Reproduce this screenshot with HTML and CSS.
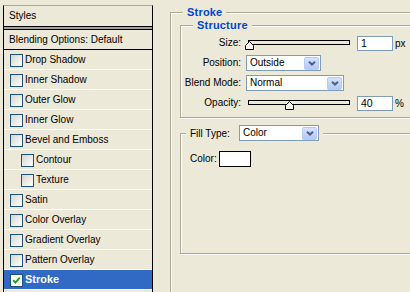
FILE: index.html
```html
<!DOCTYPE html>
<html lang="en">
<head>
  <meta charset="UTF-8">
  <title>Layer Style - Stroke</title>
  <link rel="stylesheet" href="styles.css">
</head>
<body>

  <div class="dialog">

    <!-- Styles list -->
    <div class="styles-panel">
      <div class="panel-title">Styles</div>
      <div class="panel-rule"></div>
      <div class="panel-blend">Blending Options: Default</div>
      <ul class="effect-list">
        <li class="effect"><span class="check"></span>Drop Shadow</li>
        <li class="effect"><span class="check"></span>Inner Shadow</li>
        <li class="effect"><span class="check"></span>Outer Glow</li>
        <li class="effect"><span class="check"></span>Inner Glow</li>
        <li class="effect"><span class="check"></span>Bevel and Emboss</li>
        <li class="effect sub"><span class="check"></span>Contour</li>
        <li class="effect sub"><span class="check"></span>Texture</li>
        <li class="effect"><span class="check"></span>Satin</li>
        <li class="effect"><span class="check"></span>Color Overlay</li>
        <li class="effect"><span class="check"></span>Gradient Overlay</li>
        <li class="effect"><span class="check"></span>Pattern Overlay</li>
        <li class="effect selected">
          <span class="check checked">
            <svg width="9" height="9" viewBox="0 0 9 9"><path d="M1.2 4.2L3.4 6.6L7.8 1.6" fill="none" stroke="#21A121" stroke-width="2"/></svg>
          </span>Stroke
        </li>
      </ul>
    </div>

    <!-- Stroke settings -->
    <div class="settings">
      <div class="group group-stroke">
        <span class="group-title">Stroke</span>

        <div class="group group-structure">
          <span class="group-title">Structure</span>

          <div class="field">
            <span class="field-label">Size:</span>
            <div class="slider">
              <div class="slider-track"></div>
              <svg class="slider-thumb" style="left:0px" width="9" height="9" viewBox="0 0 9 9"><path d="M0.5 8.5V4.5L4.5 0.5L8.5 4.5V8.5Z" fill="#F4F3EE" stroke="#000"/></svg>
            </div>
            <span class="num">1</span>
            <span class="unit">px</span>
          </div>

          <div class="field">
            <span class="field-label">Position:</span>
            <div class="select select-pos">
              <span class="select-text">Outside</span>
              <span class="select-btn"><svg width="8" height="5" viewBox="0 0 8 5"><path d="M1 0.8L4 3.6L7 0.8" fill="none" stroke="#4D6185" stroke-width="2"/></svg></span>
            </div>
          </div>

          <div class="field">
            <span class="field-label">Blend Mode:</span>
            <div class="select select-blend">
              <span class="select-text">Normal</span>
              <span class="select-btn"><svg width="8" height="5" viewBox="0 0 8 5"><path d="M1 0.8L4 3.6L7 0.8" fill="none" stroke="#4D6185" stroke-width="2"/></svg></span>
            </div>
          </div>

          <div class="field">
            <span class="field-label">Opacity:</span>
            <div class="slider">
              <div class="slider-track"></div>
              <svg class="slider-thumb" style="left:40px" width="9" height="9" viewBox="0 0 9 9"><path d="M0.5 8.5V4.5L4.5 0.5L8.5 4.5V8.5Z" fill="#F4F3EE" stroke="#000"/></svg>
            </div>
            <span class="num">40</span>
            <span class="unit">%</span>
          </div>
        </div>

        <div class="group group-fill">
          <div class="fill-legend">
            <span class="fill-label">Fill Type:</span>
            <div class="select select-fill">
              <span class="select-text">Color</span>
              <span class="select-btn"><svg width="8" height="5" viewBox="0 0 8 5"><path d="M1 0.8L4 3.6L7 0.8" fill="none" stroke="#4D6185" stroke-width="2"/></svg></span>
            </div>
          </div>
          <div class="fill-body">
            <span class="color-label">Color:</span>
            <span class="swatch"></span>
          </div>
        </div>
      </div>
    </div>

  </div>

</body>
</html>
```

FILE: styles.css
```css
/* Base */
* {
  margin: 0;
  padding: 0;
  box-sizing: border-box;
}

body {
  font-family: "Liberation Sans", Arial, sans-serif;
  font-size: 10px;
  background-color: #ece9d8;
  color: #000;
  overflow: hidden;
}

.dialog {
  display: flex;
  height: 292px;
  overflow: hidden;
}

/* Styles list */
.styles-panel {
  flex-shrink: 0;
  width: 150px;
  margin: 5px 0 0 3px;
  border-top: 1px solid #aca899;
  border-left: 1px solid #000;
  border-right: 1px solid #000;
}

.panel-title {
  height: 20px;
  line-height: 20px;
  padding-left: 5px;
}

.panel-rule {
  height: 4px;
  border-top: 1px solid #000;
  border-bottom: 1px solid #000;
  background-color: #a5a397;
}

.panel-blend {
  height: 20px;
  line-height: 19px;
  padding-left: 5px;
  border-bottom: 1px solid #000;
}

.effect-list {
  list-style: none;
}

.effect {
  display: flex;
  height: 20px;
  line-height: 19px;
  padding-left: 6px;
  border-bottom: 1px solid #fff;
}

.effect.sub {
  padding-left: 17px;
}

.effect.selected {
  background-color: #316ac5;
  color: #fff;
  font-weight: bold;
  font-size: 11px;
}

.check {
  display: flex;
  align-items: center;
  justify-content: center;
  width: 13px;
  height: 13px;
  margin: 4px 2px 0 0;
  border: 1px solid #1c5180;
  background: linear-gradient(135deg, #d6d5cc, #fff);
}

.check.checked {
  background: #fff;
}

/* Settings */
.settings {
  margin: 12px 0 0 17px;
}

.group {
  position: relative;
  border: 1px solid #aca899;
  box-shadow: inset 1px 1px 0 #fff, 1px 1px 0 #fff;
}

.group-stroke {
  width: 260px;
  height: 300px;
  padding: 12px 0 0 9px;
}

.group-structure {
  width: 240px;
  padding: 9px 0 6px 0;
}

.group-fill {
  width: 240px;
  height: 121px;
  margin-top: 15px;
}

.group-title {
  position: absolute;
  top: -7px;
  left: 12px;
  padding: 0 4px;
  background-color: #ece9d8;
  color: #0046d5;
  font-weight: bold;
  font-size: 11px;
  line-height: 13px;
  letter-spacing: 0.2px;
}

/* Rows */
.field {
  display: flex;
  align-items: center;
  height: 16px;
}

.field + .field {
  margin-top: 4px;
}

.field-label {
  width: 60px;
  margin-right: 5px;
  text-align: right;
  line-height: 16px;
}

.slider {
  position: relative;
  width: 105px;
  height: 16px;
  margin-left: -1px;
  padding: 5px 0 0 3px;
}

.slider-track {
  width: 102px;
  height: 5px;
  border: 1px solid #000;
  background-color: #ece9d8;
}

.slider-thumb {
  position: absolute;
  top: 6px;
  display: block;
}

.num {
  width: 36px;
  height: 15px;
  margin-left: 7px;
  padding-left: 3px;
  border: 1px solid #7f9db9;
  background-color: #fff;
  line-height: 13px;
  font-size: 10.5px;
}

.unit {
  margin-left: 2px;
}

/* Dropdowns */
.select {
  display: flex;
  height: 16px;
  padding-left: 3px;
  border: 1px solid #7f9db9;
  background-color: #fff;
}

.select-pos { width: 75px; }
.select-blend { width: 98px; }
.select-fill { width: 80px; }

.select-text {
  flex: 1;
  line-height: 14px;
}

.select-btn {
  display: flex;
  align-items: center;
  justify-content: center;
  width: 15px;
  height: 13px;
  margin: 1px 1px 0 0;
  border: 1px solid #b9cbf5;
  border-radius: 2px;
  background: linear-gradient(#d6e2fd, #b4c8f6);
}

/* Fill */
.fill-legend {
  position: absolute;
  top: -9px;
  left: 5px;
  display: flex;
  align-items: center;
  height: 16px;
  padding: 0 4px;
  background-color: #ece9d8;
}

.fill-label {
  width: 49px;
}

.fill-body {
  display: flex;
  align-items: center;
  padding: 17px 0 0 9px;
}

.color-label {
  width: 29px;
  line-height: 16px;
}

.swatch {
  width: 32px;
  height: 16px;
  border: 1px solid #000;
  background-color: #fff;
}
```
